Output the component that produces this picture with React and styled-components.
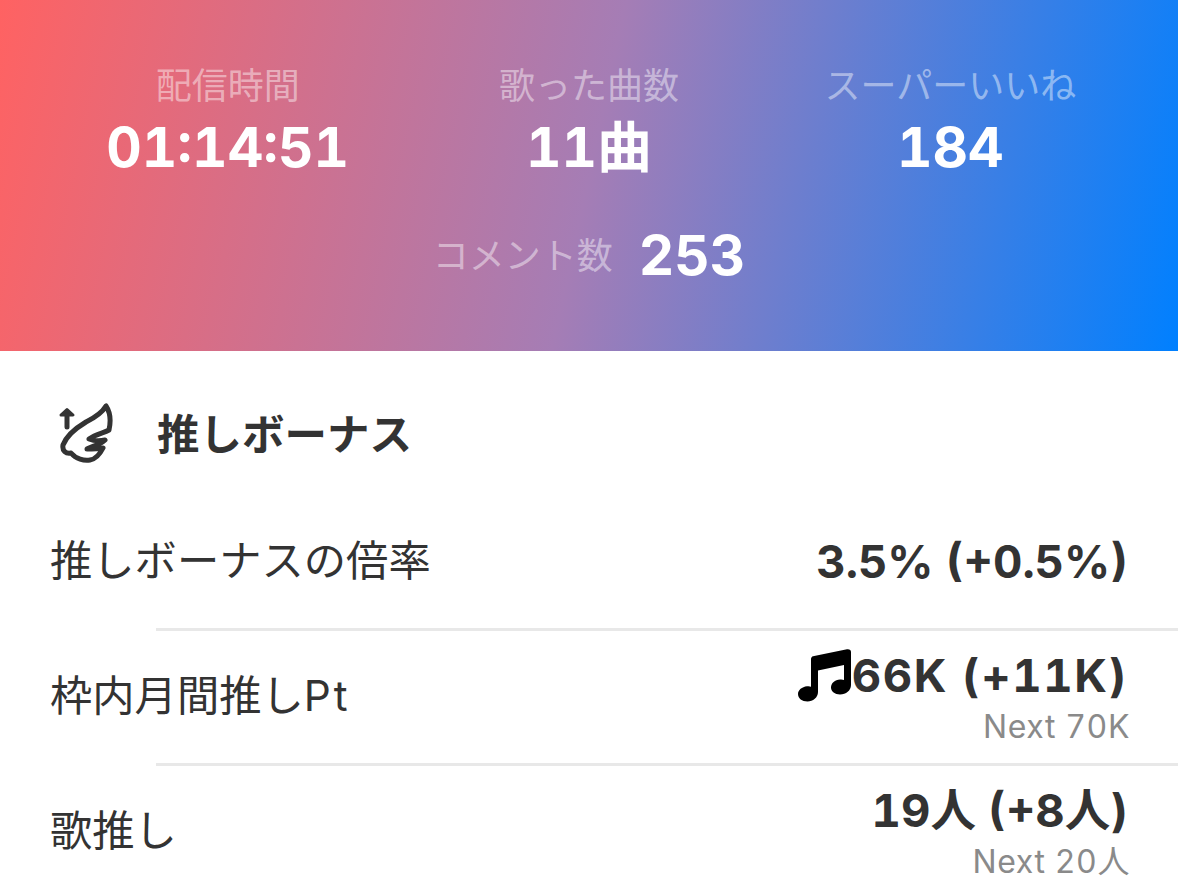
import React from 'react';
import styled, { createGlobalStyle } from 'styled-components';

const GlobalStyle = createGlobalStyle`
  html, body {
    margin: 0;
    padding: 0;
    background: #fff;
    overflow: hidden;
  }
  body {
    font-family: Inter, "Noto Sans CJK JP", "Noto Sans", sans-serif;
    font-variant-numeric: tabular-nums;
  }
`;

const Page = styled.div`
  width: 1178px;
  height: 885px;
  overflow: hidden;
  background: #fff;
`;

const Hero = styled.section`
  height: 351px;
  box-sizing: border-box;
  padding: 60px 47px 0;
  background: linear-gradient(102deg, #ff6262 0%, #a57db5 50%, #0080ff 100%);
`;

const StatGrid = styled.div`
  display: grid;
  grid-template-columns: repeat(3, 1fr);
`;

const Stat = styled.div`
  display: flex;
  flex-direction: column;
  align-items: center;
`;

const StatLabel = styled.span`
  font-size: 36px;
  line-height: 52px;
  color: rgba(255, 255, 255, 0.45);
`;

const StatValue = styled.span`
  font-size: 55px;
  line-height: 71px;
  font-weight: 700;
  color: #fff;
`;

const CommentRow = styled.div`
  display: flex;
  justify-content: center;
  align-items: center;
  gap: 26px;
  margin-top: 37px;
`;

const Section = styled.section`
  padding-top: 50px;
`;

const SectionHead = styled.header`
  display: flex;
  align-items: center;
  gap: 41px;
  height: 68px;
  margin-bottom: 21px;
  padding-left: 56px;
`;

const SectionTitle = styled.h2`
  margin: 0;
  font-size: 42.5px;
  line-height: 68px;
  font-weight: 700;
  color: #333;
`;

const Row = styled.div`
  display: flex;
  justify-content: space-between;
  align-items: center;
  box-sizing: border-box;
  height: ${(p) => p.$height}px;
  padding: 0 50px ${(p) => p.$bottom || 0}px;
`;

const RowLabel = styled.span`
  font-size: 42.3px;
  color: #333;
`;

const Latin = styled.span`
  letter-spacing: 3px;
`;

const RowValues = styled.div`
  display: flex;
  flex-direction: column;
  align-items: flex-end;
  margin-top: ${(p) => p.$shift || 0}px;
`;

const RowValue = styled.div`
  display: flex;
  align-items: center;
  font-size: 45.5px;
  line-height: 58px;
  font-weight: 700;
  letter-spacing: ${(p) => p.$spacing || 0}px;
  color: #333;
`;

const RowNext = styled.span`
  margin-right: -2px;
  font-size: 32px;
  line-height: 44px;
  letter-spacing: 0.6px;
  color: #8a8a8a;
`;

const Divider = styled.hr`
  margin: 0 0 0 156px;
  border: 0;
  height: 3px;
  background: #e8e8e8;
`;

const WingIcon = () => (
  <svg width="60" height="64" viewBox="0 0 60 64" fill="none" stroke="#333" strokeWidth="5" strokeLinecap="round" strokeLinejoin="round">
    <path d="M50 3C46 10 38 15 30 19C20 25 10 34 7 42C6 48 10 51 15 50C20 56 28 58 34 57C40 56 44 51 47 45C41 46 36 46 31 46C36 43 44 42 49 37C44 38 38 38 33 36C40 31 48 30 53 27C55 18 54 9 50 3Z" />
    <path d="M11 24V9" />
    <path d="M5 12L11 6.5L17 12Z" fill="#333" strokeWidth="3" />
  </svg>
);

const NoteIcon = () => (
  <svg width="54" height="54" viewBox="0 0 54 54" fill="#000">
    <path d="M13 10C13 8.5 14 7.5 15 7.2L49 .3C51.5 0 53 1 53 3V36C53 41.5 48 45.5 42 45.5C37 45.5 33 42.5 33 38.5C33 34 37 31 42 30.5C43.5 30.3 45 30.5 46 31V16L20 21.5V43C20 48.5 15 52.5 9.5 52.5C4 52.5 0 49.5 0 45C0 41 4 38 9 37.3C10.5 37 12 37.2 13 37.7Z" />
  </svg>
);

const stats = [
  { label: '配信時間', value: '01:14:51' },
  { label: '歌った曲数', value: '11曲' },
  { label: 'スーパーいいね', value: '184' },
];

const App = () => (
  <Page>
    <GlobalStyle />
    <Hero>
      <StatGrid>
        {stats.map((s) => (
          <Stat key={s.label}>
            <StatLabel>{s.label}</StatLabel>
            <StatValue>{s.value}</StatValue>
          </Stat>
        ))}
      </StatGrid>
      <CommentRow>
        <StatLabel>コメント数</StatLabel>
        <StatValue>253</StatValue>
      </CommentRow>
    </Hero>
    <Section>
      <SectionHead>
        <WingIcon />
        <SectionTitle>推しボーナス</SectionTitle>
      </SectionHead>
      <Row $height={138} $bottom={4}>
        <RowLabel>推しボーナスの倍率</RowLabel>
        <RowValues $shift={10}>
          <RowValue>3.5% (+0.5%)</RowValue>
        </RowValues>
      </Row>
      <Divider />
      <Row $height={132} $bottom={10}>
        <RowLabel>枠内月間推し<Latin>Pt</Latin></RowLabel>
        <RowValues $shift={12}>
          <RowValue $spacing={1.6}>
            <NoteIcon />
            66K (+11K)
          </RowValue>
          <RowNext>Next 70K</RowNext>
        </RowValues>
      </Row>
      <Divider />
      <Row $height={132} $bottom={10}>
        <RowLabel>歌推し</RowLabel>
        <RowValues $shift={12}>
          <RowValue>19人 (+8人)</RowValue>
          <RowNext>Next 20人</RowNext>
        </RowValues>
      </Row>
    </Section>
  </Page>
);

export default App;
